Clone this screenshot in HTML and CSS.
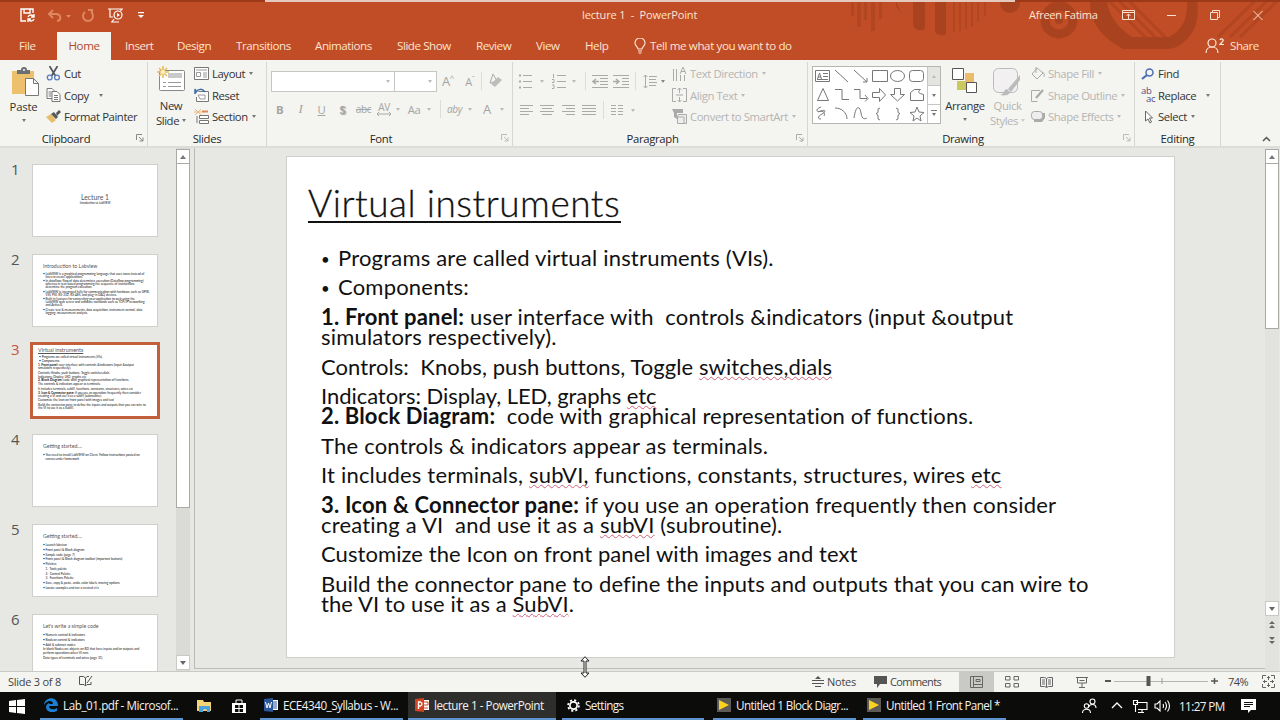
FILE: index.html
```
<!DOCTYPE html>
<html lang="en">
<head>
  <meta charset="utf-8">
  <title>lecture 1 - PowerPoint</title>
  <link rel="stylesheet" href="styles.css">
</head>
<body>
  <!-- title bar and tabs -->
  <header class="top">
    <svg class="art" width="480" height="60" viewBox="0 0 480 60" fill="#a9431f">
      <path d="M51 2h3v14h-3zM57 2h4v25h-4zM64 2h3v18h-3zM71 2h4v29h-4zM79 2h3v17h-3z" opacity=".6"/>
      <path d="M96 2l6 12-6-8zM113 2h12v25q0 4-6 3t-6-7zM135 2h11v31q0 3-6 2t-5-6z"/>
      <path d="M153 2h2v30h-2zM159 2h2v29h-2zM165 2h2v27h-2zM171 2h2v25h-2zM177 2h2v20h-2zM184 2h2v14h-2z" opacity=".6"/>
      <circle cx="210" cy="3" r="10"/>
      <circle cx="259" cy="20" r="14" fill="none" stroke="#a9431f" stroke-width="9"/><circle cx="259" cy="20" r="4"/>
      <path d="M290 0h17q2 22 25 37h37q20-10 18-37h10q4 27-12 41-8 8-18 8h-44q-34-18-33-49z"/>
      <path d="M308 0l42 42M318 0l41 41M328 0l40 40M418 37l38-37M430 37l38-37M440 37l38-37" stroke="#a9431f" stroke-width="3" opacity=".6"/>
    </svg>
    <div class="strip"><i></i></div>
    <div class="titlebar">
      <div class="quick">
        <svg width="15" height="15" viewBox="0 0 15 15" fill="none" stroke="#fff" stroke-width="1.4"><path d="M6 13H1V1h12v4M4 1v4h6V1M8 9a3 3 0 0 1 5-1M14 6v3h-3M14 11a3 3 0 0 1-5 1M8 14v-3h3"/></svg>
        <svg class="dim" width="24" height="14" viewBox="0 0 24 14" fill="none" stroke="#dd8763" stroke-width="2"><path d="M5 1L1 5l4 4M1 5h7c5 0 6 6 1 7"/><path d="M18 6h5l-2.500 3z" fill="#dd8763" stroke="none"/></svg>
        <svg class="dim" width="14" height="14" viewBox="0 0 14 14" fill="none" stroke="#dd8763" stroke-width="2"><path d="M4 3a5 5 0 1 0 6 0M7 1h4v4"/></svg>
        <svg class="show" width="16" height="15" viewBox="0 0 16 15" fill="none" stroke="#fff" stroke-width="1.2"><path d="M0 1h15M2 1v8h3M13 1v2M6 11l-2 3M3 14h8"/><circle cx="10" cy="7" r="4"/><path d="M9 5l3 2-3 2z" fill="#fff" stroke="none"/></svg>
        <svg class="more" width="6" height="7" viewBox="0 0 6 7" fill="#fff"><path d="M0 0h6v1.300H0zM0 3h6L3 6z"/></svg>
      </div>
      <div class="doc-title">lecture 1&nbsp; -&nbsp; PowerPoint</div>
      <div class="user">Afreen Fatima</div>
      <svg width="150" height="16" viewBox="0 0 150 16" fill="none" stroke="#f8dfce" stroke-width="1"><path d="M.5 3.500h12v9H.5zM.5 5.500h12M6.500 12V7M4.500 9l2-2 2 2M45 8.500h9M88.500 5.500h7v7h-7zM90.500 5V3.500h7v7H96M131.500 4l9 9M140.500 4l-9 9"/></svg>
    </div>
    <nav class="tabs">
      <span class="t-file">File</span>
      <span class="t-home">Home</span>
      <span class="t-insert">Insert</span>
      <span class="t-design">Design</span>
      <span class="t-trans">Transitions</span>
      <span class="t-anim">Animations</span>
      <span class="t-show">Slide Show</span>
      <span class="t-review">Review</span>
      <span class="t-view">View</span>
      <span class="t-help">Help</span>
      <svg class="bulb" width="12" height="16" viewBox="0 0 12 16" fill="none" stroke="#fdeadb" stroke-width="1.1"><path d="M4 11c0-2-3-3-3-6a5 5 0 0 1 10 0c0 3-3 4-3 6zM4 13h4M4.500 15h3"/></svg>
      <span class="tell">Tell me what you want to do</span>
      <svg class="person" width="21" height="16" viewBox="0 0 21 16" fill="none" stroke="#fdeadb" stroke-width="1.2"><circle cx="7" cy="5" r="4"/><path d="M1 15c0-8 12-8 12 0M15 2c1-2 4-1 3 1l-3 3.500h4"/></svg>
      <span class="share">Share</span>
    </nav>
  </header>

  <!-- ribbon -->
  <section class="ribbon">
    <div class="group g-clip">
      <div class="tools">
        <div class="big paste">
          <svg width="27" height="29" viewBox="0 0 27 29"><path d="M0 4h22v23H0z" fill="#edc06d"/><path d="M5 7V3h4q0-3 3-3t3 3h3v4z" fill="#6b6e72"/><circle cx="12" cy="3" r="1" fill="#fff"/><path d="M13.500 11.500h8l5 5v12h-13zM21.500 11.500v5h5" fill="#fff" stroke="#777"/></svg>
          <span>Paste</span><b class="arr"></b>
        </div>
        <div class="cmds">
          <div class="cmd"><svg width="14" height="15" viewBox="0 0 14 15" fill="none"><path d="M3 0l6 10M11 0L5 10" stroke="#50545c" stroke-width="1.700"/><circle cx="3.200" cy="11.500" r="2.400" stroke="#5b7dc0" stroke-width="1.300"/><circle cx="10.500" cy="11.500" r="2.400" stroke="#5b7dc0" stroke-width="1.300"/></svg><span>Cut</span></div>
          <div class="cmd"><svg width="14" height="14" viewBox="0 0 14 14" fill="#fff" stroke="#777"><path d="M.5.500h5l2 2v8h-7zM2 4h3M2 6h3M2 8h3"/><path d="M5.500 3.500h5l3 3v7h-8zM7.500 7.500h4M7.500 9.500h4M7.500 11.500h4"/></svg><span>Copy</span><b class="arr far"></b></div>
          <div class="cmd"><svg width="15" height="14" viewBox="0 0 15 14"><path d="M0 7l5-3 5 6-4 3z" fill="#e8bd69"/><path d="M5 4l3-2 4 5-2 2zM10 3l3-3 2 2-4 4z" fill="#55585c"/></svg><span>Format Painter</span></div>
        </div>
      </div>
      <div class="label"><span>Clipboard</span><svg class="launch" width="8" height="8" viewBox="0 0 8 8" fill="none" stroke="#888"><path d="M.5 6V.500H6M3 3l4 4M7 3.500V7H3.500"/></svg></div>
    </div>

    <div class="group g-slides">
      <div class="tools">
        <div class="big new">
          <svg width="29" height="26" viewBox="0 0 29 26"><rect x="2.500" y="4.500" width="25" height="20" rx="1" fill="#fff" stroke="#888"/><path d="M11 7h14v5H11z" fill="#c9c9c9"/><path d="M6 16.500h3M11 16.500h13M6 20.500h3M11 20.500h13" stroke="#999"/><path d="M6 0v12M0 6h12M2 2l8 8M10 2l-8 8" stroke="#e9bd5a" stroke-width="1.600"/><circle cx="6" cy="6" r="2" fill="#fff3cc"/></svg>
          <span>New</span><span class="second">Slide<b class="arr"></b></span>
        </div>
        <div class="cmds">
          <div class="cmd"><svg width="15" height="13" viewBox="0 0 15 13" fill="#fff" stroke="#777"><path d="M.5.500h14v12H.5z"/><path d="M2 3h11M2.500 5.500h4v4h-4zM9 6h4M9 8h4M9 10h4" stroke="#999"/></svg><span>Layout</span><b class="arr"></b></div>
          <div class="cmd"><svg width="15" height="14" viewBox="0 0 15 14" fill="none" stroke="#777"><path d="M4.500 3.500h10v10h-12V9" fill="#fff"/><path d="M4 7h7v4H6z" stroke="#999"/><path d="M1 6V1l1 3c2-3 6-4 9 0" stroke="#3f6fa8" stroke-width="1.500"/></svg><span>Reset</span></div>
          <div class="cmd"><svg width="15" height="15" viewBox="0 0 15 15" fill="#fff" stroke="#777"><path d="M0 3h8M1 0l6 6M7 0L1 6" stroke="#eeb57e"/><path d="M8 2.500h6" stroke="#e08a55" stroke-width="2"/><path d="M5.500 6.500h9v3h-9zM5.500 11.500h9v3h-9zM3 7v7"/></svg><span>Section</span><b class="arr"></b></div>
        </div>
      </div>
      <div class="label"><span>Slides</span></div>
    </div>

    <div class="group g-font off">
      <div class="rows">
        <div class="line">
          <i class="box w123"><b class="arr"></b></i><i class="box w43"><b class="arr"></b></i>
          <i class="c w22 glyph">A<sup>^</sup></i><i class="c w22 glyph sm">A<sup>ˇ</sup></i><i class="sep"></i>
          <i class="c w28"><svg width="14" height="14" viewBox="0 0 14 14"><path d="M1 9L4 0l4 7z" fill="none" stroke="#aaa"/><path d="M2 10l7-7 4 3-7 7z" fill="#bdbdbd"/></svg></i>
        </div>
        <div class="line second-line">
          <i class="c w21 bold">B</i><i class="c w21 ital">I</i><i class="c w21 under">U</i><i class="c w21 shadow">S</i><i class="c w21 strike">abc</i>
          <i class="c w20 kern">AV<svg width="14" height="4" viewBox="0 0 14 4" fill="none" stroke="#aaa"><path d="M0 2h14M2 0L0 2l2 2M12 0l2 2-2 2"/></svg></i><i class="c w8"><b class="arr"></b></i>
          <i class="c w24 aa">Aa</i><i class="c w6"><b class="arr"></b></i><i class="c w16"><i class="sep"></i></i>
          <i class="c w13 aby">aby</i><i class="c w18"><b class="arr"></b></i><i class="c w16 glyph">A</i><i class="c w14"><b class="arr"></b></i>
        </div>
      </div>
      <div class="label"><span>Font</span><svg class="launch" width="8" height="8" viewBox="0 0 8 8" fill="none" stroke="#bbb"><path d="M.5 6V.500H6M3 3l4 4M7 3.500V7H3.500"/></svg></div>
    </div>

    <div class="group g-para off">
      <div class="tools">
        <div class="rows">
          <div class="line">
            <i class="c w14"><svg width="14" height="15" viewBox="0 0 14 15" stroke="#aaa"><path d="M0 1.500h2M0 7.500h2M0 13.500h2" stroke-width="2"/><path d="M4 1.500h9M4 7.500h9M4 13.500h9"/></svg></i><i class="c w18"><b class="arr"></b></i>
            <i class="c w15"><svg width="14" height="15" viewBox="0 0 14 15" stroke="#aaa" fill="none"><path d="M1.500 0v4M0 5.500h2v3H0M0 11h2v3.500H0M5 1.500h9M5 7.500h9M5 13.500h9"/></svg></i><i class="c w16"><b class="arr"></b></i><i class="c w6"><i class="sep"></i></i>
            <i class="c w24"><svg width="16" height="13" viewBox="0 0 16 13" stroke="#aaa" fill="none"><path d="M0 .500h16M8 3.500h8M8 6.500h8M8 9.500h8M0 12.500h16"/><path d="M1 6.500h6M4 4L1 6.500 4 9" stroke-width="1.500"/></svg></i>
            <i class="c w18"><svg width="16" height="13" viewBox="0 0 16 13" stroke="#aaa" fill="none"><path d="M0 .500h16M9 3.500h7M9 6.500h7M9 9.500h7M0 12.500h16"/><path d="M0 6.500h6M3 4l3 2.500L3 9" stroke-width="1.500"/></svg></i><i class="c w11"><i class="sep"></i></i>
            <i class="c w18"><svg width="14" height="15" viewBox="0 0 14 15" stroke="#aaa" fill="none"><path d="M2.500 1v13M.500 3l2-2 2 2M.500 12l2 2 2-2M6 2.500h8M6 5.500h7M6 8.500h8M6 11.500h7"/></svg></i><i class="c w8"><b class="arr dk"></b></i>
          </div>
          <div class="line second-line">
            <i class="c w14"><svg width="13" height="11" viewBox="0 0 13 11" stroke="#aaa"><path d="M0 .500h13M0 3.500h9M0 6.500h13M0 9.500h9"/></svg></i>
            <i class="c w28"><svg width="14" height="11" viewBox="0 0 14 11" stroke="#aaa"><path d="M0 .500h14M2 3.500h10M0 6.500h14M2 9.500h10"/></svg></i>
            <i class="c w14"><svg width="13" height="11" viewBox="0 0 13 11" stroke="#aaa"><path d="M0 .500h13M4 3.500h9M0 6.500h13M4 9.500h9"/></svg></i>
            <i class="c w28"><svg width="14" height="11" viewBox="0 0 14 11" stroke="#aaa"><path d="M0 .500h14M0 3.500h14M0 6.500h14M0 9.500h14"/></svg></i><i class="sep"></i>
            <i class="c w26"><svg width="12" height="11" viewBox="0 0 12 11" stroke="#aaa"><path d="M0 .500h5M7 .500h5M0 3.500h5M7 3.500h5M0 6.500h5M7 6.500h5M0 9.500h5M7 9.500h5"/></svg></i><i class="c w6"><b class="arr"></b></i>
          </div>
        </div>
        <div class="cmds">
          <div class="cmd"><svg width="15" height="14" viewBox="0 0 15 14" stroke="#aaa" fill="none"><path d="M1.500 2v12M4.500 2v12M8 7l3-7 3 7M9 4.500h4M8.500 8v6M12.500 8v6"/></svg><span>Text Direction</span><b class="arr"></b></div>
          <div class="cmd"><svg width="15" height="14" viewBox="0 0 15 14" stroke="#aaa" fill="none"><path d="M4 .500H.5v13H4M11 .500h3.500v13H11M7.500 0v5M5.500 2l2-2 2 2M4 7h7M7.500 14V9M5.500 12l2 2 2-2"/></svg><span>Align Text</span><b class="arr"></b></div>
          <div class="cmd"><svg width="15" height="15" viewBox="0 0 15 15"><path d="M0 0h11v4H5v6L2 8V4z" fill="#aaa"/><path d="M6.500 5.500h8v9h-9v-7zM5 8h7v6" fill="#eee" stroke="#aaa"/></svg><span>Convert to SmartArt</span><b class="arr"></b></div>
        </div>
      </div>
      <div class="label"><span>Paragraph</span><svg class="launch" width="8" height="8" viewBox="0 0 8 8" fill="none" stroke="#aaa"><path d="M.5 6V.500H6M3 3l4 4M7 3.500V7H3.500"/></svg></div>
    </div>

    <div class="group g-draw">
      <div class="tools">
        <div class="gallery">
          <svg width="114" height="56" viewBox="0 0 114 56" fill="none" stroke="#777" stroke-width="1">
            <path d="M2.500 3.500h14v11h-14zM4.500 12l2-6 2 6M5 10h3M10 6.500h5M10 9.500h5M4 12.500h11"/>
            <path d="M22 3l13 12M41 3l13 12M54 11v4h-4M59.500 3.500h15v11h-15z"/><ellipse cx="84.500" cy="9" rx="7" ry="5.500"/><rect x="96.500" y="3.500" width="14" height="11" rx="3"/>
            <path d="M4.500 33.500l5.500-12 5.500 12zM22 22.500h7v10h7M41 22.500h6v9h7M52 28l3 3.500-3 3M59.500 25.500h7v-4l6 6.500-6 6.500v-4h-7zM81.500 21.500h6v6h4l-7 6.500-7-6.500h4zM97.500 25.500l4-3h6c-4 3-1 4 3 5v6h-13z"/>
            <path d="M8 40c-6 2-5 6 0 4s5 1 1 3-5 5-1 5M5 45c4-2 8 0 6 4M22 41c7 0 12 5 12 11M41 51c2-14 6-12 7-5s4 6 6 5M67 41q-3 0-2 4 0 1-2 1.500 2 .500 2 2.500-1 4 2 4M83 41q3 0 2 4 0 1 2 1.500-2 .500-2 2.500 1 4-2 4M104 40l2 5 5 .500-4 3.500 1 5-4-3-4 3 1-5-4-3.500 5-.500z"/>
          </svg>
          <div class="gal-nav"><i class="mute"><b class="arr up"></b></i><i><b class="arr"></b></i><i><b class="arr ln"></b></i></div>
        </div>
        <div class="big arrange">
          <svg width="26" height="26" viewBox="0 0 26 26"><path d="M13 5h9v9h-9z" fill="#e9bd69"/><path d="M5 13h9v9H5z" fill="#c9c95e"/><path d="M.5.500h11v11H.500zM14.500 14.500h10v10h-10z" fill="#fff" stroke="#555"/></svg>
          <span>Arrange</span><b class="arr"></b>
        </div>
        <div class="big quickst off">
          <svg width="29" height="28" viewBox="0 0 29 28"><rect x=".5" y=".5" width="24" height="24" rx="5" fill="#f3f0f1" stroke="#bbb"/><path d="M27 7l-12 14 3 3 9-12zM14 21c-3 0-3 5-7 6 5 1 10 0 10-3z" fill="#bbb"/></svg>
          <span>Quick</span><span class="second">Styles<b class="arr"></b></span>
        </div>
        <div class="cmds off">
          <div class="cmd"><svg width="14" height="14" viewBox="0 0 14 14" stroke="#aaa" fill="none"><path d="M6 1L1 7l5 5 6-6zM5 0v6M11 5c3 1 2 3 2 5"/></svg><span>Shape Fill</span><b class="arr"></b></div>
          <div class="cmd"><svg width="14" height="13" viewBox="0 0 14 13" stroke="#aaa" fill="none"><path d="M9 1.500H.5v11h6"/><path d="M5 9l7-8" stroke-width="2.300"/></svg><span>Shape Outline</span><b class="arr"></b></div>
          <div class="cmd"><svg width="14" height="13" viewBox="0 0 14 13"><path d="M3 3h11v5l-3 4H3z" fill="#aaa"/><rect x=".5" y="1.500" width="11" height="8" rx="3" fill="#eee" stroke="#aaa"/></svg><span>Shape Effects</span><b class="arr"></b></div>
        </div>
      </div>
      <div class="label"><span>Drawing</span><svg class="launch" width="8" height="8" viewBox="0 0 8 8" fill="none" stroke="#bbb"><path d="M.5 6V.500H6M3 3l4 4M7 3.500V7H3.500"/></svg></div>
    </div>

    <div class="group g-edit">
      <div class="tools">
        <div class="cmds">
          <div class="cmd"><svg width="13" height="12" viewBox="0 0 13 12" fill="none" stroke="#4d6db3"><circle cx="8.500" cy="4.500" r="3.500" stroke-width="1.500"/><path d="M6 7l-5 4" stroke-width="2.200"/></svg><span>Find</span></div>
          <div class="cmd"><i class="abac"><em>ab</em><em class="ac">ac</em></i><span>Replace</span><b class="arr far"></b></div>
          <div class="cmd"><svg width="13" height="14" viewBox="0 0 13 14" fill="#fff" stroke="#666"><path d="M4.500 1v10l2.500-2 2 4 1.500-1-2-4h3z"/></svg><span>Select</span><b class="arr"></b></div>
        </div>
      </div>
      <div class="label"><span>Editing</span></div>
    </div>
    <svg class="collapse" width="9" height="6" viewBox="0 0 9 6" fill="none" stroke="#555" stroke-width="1.500"><path d="M1 5l3.500-3.500L8 5"/></svg>
  </section>

  <!-- slide list and slide -->
  <main class="work">
    <aside class="thumbs">
      <div class="item"><span class="num">1</span><div class="thumb cover"><h6>Lecture 1</h6><p>Introduction to LabVIEW</p></div></div>
      <div class="item"><span class="num">2</span><div class="thumb dense"><h6>Introduction to Labview</h6>
        <ul><li>LabVIEW is a graphical programming language that uses icons instead of<br>lines to create applications.</li><li>In dataflow: flow of data determines execution (Dataflow programming)<br>whereas in text based programming the sequence of instructions<br>determine the program execution.</li><li>LabVIEW is integrated fully for communication with hardware such as GPIB,<br>VXI, PXI, RS-232, RS-485, and plug-in DAQ devices.</li><li>Built-in features for connecting your application to web using the<br>LabVIEW web server and software standards such as TCP/IP networking<br>and ActiveX.</li><li>Create test &amp; measurements, data acquisition, instrument control, data<br>logging, measurement analysis.</li></ul></div></div>
      <div class="item sel"><span class="num">3</span><div class="thumb mini"><h6><u>Virtual instruments</u></h6>
        <p class="in">• Programs are called virtual instruments (VIs).</p><p class="in">• Components:</p><p><b>1. Front panel:</b> user interface with controls &amp;indicators (input &amp;output<br>simulators respectively).</p><p>Controls: Knobs, push buttons, Toggle switches,dials</p><p>Indicators: Display, LED, graphs etc<br><b>2. Block Diagram:</b> code with graphical representation of functions.</p><p>The controls &amp; indicators appear as terminals.</p><p>It includes terminals, subVI, functions, constants, structures, wires etc</p><p><b>3. Icon &amp; Connector pane:</b> if you use an operation frequently then consider<br>creating a VI and use it as a subVI (subroutine).</p><p>Customize the Icon on front panel with images and text</p><p>Build the connector pane to define the inputs and outputs that you can wire to<br>the VI to use it as a SubVI.</p></div></div>
      <div class="item"><span class="num">4</span><div class="thumb"><h6>Getting started....</h6><ul><li>You need to install LabVIEW on Client. Follow instructions posted on<br>canvas under homework</li></ul></div></div>
      <div class="item"><span class="num">5</span><div class="thumb list"><h6>Getting started....</h6><ul><li>Launch labview</li><li>Front panel &amp; Block diagram</li><li>Sample code (page 7)</li><li>Front panel &amp; Block diagram toolbar (important buttons)</li><li>Palettes</li><li class="n">1.&nbsp; Tools palette</li><li class="n">2.&nbsp; Control Palette</li><li class="n">3.&nbsp; Functions Palette</li><li>Save, copy &amp; paste, undo, color labels, moving options</li><li>Locate examples and run a created vi/s</li></ul></div></div>
      <div class="item"><span class="num">6</span><div class="thumb list"><h6>Let's write a simple code</h6><ul><li>Numeric control &amp; indicators</li><li>Boolean control &amp; indicators</li><li>Add &amp; subtract nodes</li></ul><p>In block Nodes are objects on BD that have inputs and/or outputs and<br>perform operations when VI runs</p><p>Data types of terminals and wires (page 31)</p></div></div>
    </aside>
    <div class="scroll left"><i class="btn"><b class="arr up"></b></i><i class="bar"></i><i class="btn low"><b class="arr"></b></i></div>

    <section class="stage">
      <article class="slide">
        <h1>Virtual instruments</h1>
        <p class="bul">Programs are called virtual instruments (VIs).</p>
        <p class="bul">Components:</p>
        <p><b>1. Front panel:</b> user interface with  controls &amp;indicators (input &amp;output</p>
        <p class="tight">simulators respectively).</p>
        <p class="snug">Controls:  Knobs, push buttons, Toggle <u>switches,dials</u></p>
        <p class="snugger">Indicators: Display, LED, graphs <u>etc</u></p>
        <p class="tight long"><b>2. Block Diagram:</b>  code with graphical representation of functions.</p>
        <p>The controls &amp; indicators appear as terminals.</p>
        <p>It includes terminals, <u>subVI,</u> functions, constants, structures, wires <u>etc</u></p>
        <p><b>3. Icon &amp; Connector pane:</b> if you use an operation frequently then consider</p>
        <p class="tight">creating a VI  and use it as a <u>subVI</u> (subroutine).</p>
        <p class="snug">Customize the Icon on front panel with images and text</p>
        <p class="long">Build the connector pane to define the inputs and outputs that you can wire to</p>
        <p class="tight snug">the VI to use it as a <u>SubVI</u>.</p>
      </article>
    </section>
    <div class="scroll right"><i class="btn"><b class="arr up"></b></i><i class="bar"></i><i class="btn low"><b class="arr"></b></i>
      <svg width="14" height="32" viewBox="0 0 14 32" fill="#666"><path d="M4 8l3-3 3 3zM4 12l3-3 3 3zM4 21h6l-3 3zM4 25h6l-3 3z"/></svg></div>
  </main>

  <footer class="status">
    <span class="count">Slide 3 of 8</span>
    <svg class="spell" width="14" height="12" viewBox="0 0 14 12" fill="none" stroke="#555"><path d="M6.500 11L5 9.500H.5v-8h4l2 1.500v8l1.500-1.500h4V7M6.500 3L8 1.500h2M8 8l5-7"/></svg>
    <svg class="notes-i" width="12" height="12" viewBox="0 0 12 12" stroke="#555"><path d="M0 5.500h12M0 8.500h12M3 11.500h6"/><path d="M3 4l3-3 3 3z" fill="#555" stroke="none"/></svg>
    <span class="notes">Notes</span>
    <svg class="com-i" width="14" height="13" viewBox="0 0 14 13" fill="#555"><path d="M0 1h13v8H6l-3 4V9H0z"/></svg>
    <span class="comments">Comments</span>
    <i class="view on"><svg width="13" height="12" viewBox="0 0 13 12" fill="none" stroke="#666"><path d="M.5.500h12v11H.500zM3.500 1v10M4 8.500h8M6 3.500h4v2H6z"/></svg></i>
    <i class="view"><svg width="14" height="12" viewBox="0 0 14 12" fill="none" stroke="#666"><path d="M.5.500h4.500v3.500H.500zM9 .500h4.500v3.500H9zM.5 7.500h4.500v3.500H.500zM9 7.500h4.500v3.500H9z"/></svg></i>
    <i class="view"><svg width="13" height="12" viewBox="0 0 13 12" fill="none" stroke="#666"><path d="M.5 1.500h4l2 1 2-1h4v9h-4l-2 1-2-1h-4zM6.500 3v8M2 4h3M2 6h3M2 8h3M8 4h3M8 6h3M8 8h3"/></svg></i>
    <i class="view"><svg width="12" height="12" viewBox="0 0 12 12" fill="none" stroke="#666"><path d="M0 1.500h12M1.500 2v5h9V2M3.500 4.500h5M6 7v4M3 11.500h6"/></svg></i>
    <svg class="zoombar" width="114" height="14" viewBox="0 0 114 14" stroke="#555"><path d="M0 7h6" stroke-width="2"/><path d="M9 7.500h94" stroke="#b5b5b5"/><path d="M57 4v6" stroke="#999"/><path d="M41.500 2h4v10h-4z" fill="#555" stroke="none"/><path d="M106 7h7M109.500 4v6" stroke-width="1.500"/></svg>
    <span class="pct">74%</span>
    <svg class="fit" width="13" height="13" viewBox="0 0 13 13" fill="none" stroke="#666"><path d="M.5 4V.5H4M9 .500h3.500V4M12.500 9v3.500H9M4 12.500H.5V9M6.500 1v4M5 3l1.500-1.500L8 3M6.500 8v4M5 10l1.500 1.500L8 10M1 6.500h4M3 5L1.500 6.500 3 8M8 6.500h4M10 5l1.500 1.500L10 8"/></svg>
  </footer>

  <footer class="taskbar">
    <svg class="start" width="16" height="15" viewBox="0 0 16 15" fill="#fff"><path d="M0 2l7-1v6H0zM8 1l8-1v7H8zM0 8h7v6l-7-1zM8 8h8v7l-8-1z"/></svg>
    <div class="task t1"><svg width="14" height="14" viewBox="0 0 14 14" fill="#1b7fd4"><path d="M0 7C1-2 14-2 14 8H5c0 4 5 4 8 2v3C7 16 2 13 2 9c0-2 2-4 4-4-1 0-1 1-1 1h4C9 2 3 2 0 7z"/></svg><span>Lab_01.pdf - Microsof...</span></div>
    <svg class="folder" width="15" height="14" viewBox="0 0 15 14"><path d="M0 1h6l1 2h7v9H0z" fill="#f4d477"/><path d="M2 7h11v6h-3v-2q-2-2-4 0v2H2z" fill="#4ba3dd"/></svg>
    <svg class="store" width="14" height="15" viewBox="0 0 14 15"><path d="M0 4h14v10H0z" fill="#fff"/><path d="M4 5V1h6v4" fill="none" stroke="#fff"/><path d="M3 6h3.500v3H3zM7.500 6H11v3H7.500zM3 10h3.500v3H3zM7.500 10H11v3H7.500z" fill="#0c0d0b"/></svg>
    <div class="task t2"><svg width="14" height="14" viewBox="0 0 14 14"><path d="M7 2h7v10H7z" fill="#fff"/><path d="M9 4h4M9 6h4M9 8h4M9 10h4" stroke="#2b579a"/><path d="M0 1l9-1v14l-9-1z" fill="#2b579a"/><path d="M1.500 4l1.500 6 1.500-5L6 10l1.500-6" fill="none" stroke="#fff"/></svg><span>ECE4340_Syllabus - W...</span></div>
    <div class="task t3"><svg width="14" height="14" viewBox="0 0 14 14"><path d="M7 2h7v10H7z" fill="#fff"/><path d="M9 4h4v3H9M9 10h4" stroke="#d04423" fill="none"/><path d="M0 1l9-1v14l-9-1z" fill="#d04423"/><path d="M3.500 11V4h2q3 2 0 4h-2" fill="none" stroke="#fff" stroke-width="1.400"/></svg><span>lecture 1 - PowerPoint</span></div>
    <div class="task t4"><svg width="13" height="13" viewBox="0 0 13 13" fill="none" stroke="#fff"><circle cx="6.500" cy="6.500" r="3.600" stroke-width="1.700"/><circle cx="6.500" cy="6.500" r="5.400" stroke-width="1.800" stroke-dasharray="2.100 2.140"/></svg><span>Settings</span></div>
    <div class="task t5"><svg width="14" height="14" viewBox="0 0 14 14"><path d="M0 0h14v14H0z" fill="#5d5a58"/><path d="M2 2l10 5-10 5z" fill="#fbd21c"/></svg><span>Untitled 1 Block Diagr...</span></div>
    <div class="task t6"><svg width="14" height="14" viewBox="0 0 14 14"><path d="M0 0h14v14H0z" fill="#5d5a58"/><path d="M2 2l10 5-10 5z" fill="#fbd21c"/></svg><span>Untitled 1 Front Panel *</span></div>
    <svg class="tray" width="90" height="16" viewBox="0 0 90 16" fill="none" stroke="#fff" stroke-width="1.100"><circle cx="10.500" cy="3.500" r="2.500"/><path d="M7 9c0-3 7-4 7 1"/><circle cx="4.500" cy="8" r="2.200"/><path d="M.5 15c0-5 8-5 8 0"/><path d="M30 10l5-5 5 5" stroke-width="1.300"/><path d="M54 4.500h11v7h-9M60 12v2M56 14.500h6M51.500 2.500h4v4h-4zM53.500 7v7"/><path d="M73 6h2l3-3v10l-3-3h-2zM81 6q1 2 0 4M83 4q3 4 0 8M85.500 2.500q4 5.500 0 11"/></svg>
    <span class="clock">11:27 PM</span>
    <svg class="note" width="17" height="16" viewBox="0 0 17 16"><path d="M1 1h15v11h-5l-3 3v-3H1z" fill="#fff"/><path d="M4 4.500h9M4 6.500h9M4 8.500h6" stroke="#111"/></svg>
  </footer>

  <svg class="cursor" width="10" height="22" viewBox="0 0 10 22" fill="#fff" stroke="#222"><path d="M5 .700L9 5H6v12h3l-4 4.300L1 17h3V5H1z"/></svg>
</body>
</html>
```
FILE: styles.css
```
* {
  box-sizing: border-box;
  margin: 0;
  padding: 0;
}

body {
  width: 1280px;
  height: 720px;
  overflow: hidden;
  display: grid;
  grid-template-rows: 60px 88px 523px 21px 28px;
  background: #e7e8e4;
  font-family: "Open Sans", "Noto Sans", sans-serif;
  font-size: 11.3px;
  letter-spacing: -0.4px;
  color: #333;
  white-space: nowrap;
}

svg { display: block; flex: none; }
i { font-style: normal; }

/* ---- title bar ---- */
.top {
  position: relative;
  background: #c04d25;
  color: #fde3d0;
}
.art { position: absolute; right: 0; top: 0; }
.strip { position: relative; height: 2px; background: #9b3918; }
.strip i { display: block; width: 750px; height: 2px; margin-left: 265px; background: #e6c9be; }
.titlebar {
  position: relative;
  display: flex;
  align-items: center;
  height: 29px;
  padding: 0 0 4px 20px;
}
.quick { display: flex; align-items: center; width: 562px; padding-top: 2px; }
.quick .dim { margin-left: 13px; }
.quick .dim + .dim { margin-left: 9px; }
.quick .show { margin-left: 13px; }
.quick .more { margin-left: 14px; }
.doc-title { width: 447px; font-size: 11px; letter-spacing: -0.15px; }
.user { width: 93px; font-size: 11px; letter-spacing: -0.25px; }

.tabs {
  position: relative;
  display: flex;
  height: 29px;
  line-height: 29px;
  font-size: 11.6px;
  letter-spacing: -0.45px;
}
.tabs span { flex: none; }
.t-file { width: 57px; padding-left: 19px; }
.t-home { width: 54px; text-align: center; background: #f4f4f1; color: #b0492a; margin-top: 1px; line-height: 28px; }
.t-insert { width: 66px; padding-left: 14px; }
.t-design { width: 59px; }
.t-trans { width: 79px; }
.t-anim { width: 82px; }
.t-show { width: 79px; }
.t-review { width: 60px; }
.t-view { width: 49px; }
.t-help { width: 49px; }
.bulb { margin-top: 7px; }
.tell { width: 559px; padding-left: 4px; letter-spacing: -0.4px; }
.person { margin-top: 7px; }
.share { padding-left: 4px; }

/* ---- ribbon ---- */
.ribbon {
  display: flex;
  background: #f4f4f1;
  border-bottom: 2px solid #dcdcd9;
  color: #333;
}
.group {
  display: flex;
  flex-direction: column;
  flex: none;
  height: 84px;
  margin-top: 2px;
  border-right: 1px solid #d6d6d3;
}
.g-clip { width: 148px; padding-left: 8px; }
.g-slides { width: 119px; padding-left: 7px; }
.g-font { width: 246px; padding-left: 4px; }
.g-para { width: 295px; padding-left: 6px; }
.g-draw { width: 327px; padding-left: 4px; }
.g-edit { width: 86px; padding-left: 6px; }

.tools { display: flex; height: 68px; }
.label {
  display: flex;
  align-items: center;
  height: 16px;
  color: #262626;
  letter-spacing: -0.3px;
}
.label span { flex: 1; text-align: center; padding-right: 4px; }
.g-clip .label { margin-left: -8px; }
.g-slides .label { margin-left: -7px; }
.g-slides .label span { padding-right: 0; }
.g-font .label { margin-left: -6px; }
.g-para .label { margin-left: -6px; }
.g-draw .label { margin-left: -5px; }
.g-edit .label { margin-left: -6px; }
.g-edit .label span { padding-right: 0; }
.launch { margin-right: 3px; }

.cmds { padding-top: 1px; }
.cmd { display: flex; align-items: center; height: 21.5px; }
.cmd > span { padding-left: 3px; }
.g-clip .cmds { padding-left: 7px; }
.g-clip .cmd svg { width: 15px; }
.g-slides .cmds { padding-left: 7px; }
.off .cmd, .off .big { color: #b4b4b1; }
.off.big, .off.cmds .cmd { color: #b4b4b1; }

.arr {
  display: inline-block;
  width: 0;
  height: 0;
  margin-left: 4px;
  border: 2.5px solid transparent;
  border-top: 3px solid #777;
  border-bottom: 0;
}
.arr.up { border-top: 0; border-bottom: 3px solid #777; }
.arr.far { margin-left: 10px; }
.off .arr { border-top-color: #bbb; }
.off .arr.dk { border-top-color: #888; }

.big { display: flex; flex-direction: column; align-items: center; line-height: 15px; }
.big > .arr { margin: 5px 0 0; }
.big .second .arr { margin: 0 0 3px 3px; }
.paste { width: 31px; padding-top: 5px; }
.paste svg { margin: 0 0 3px 4px; }
.paste span { letter-spacing: -0.2px; }
.new { width: 32px; padding-top: 4px; }
.new svg { margin-bottom: 6px; }

.rows { padding-top: 8px; height: 68px; }
.line { display: flex; align-items: center; height: 22px; }
.second-line { margin-top: 7px; }
.g-font .second-line { margin-left: -2px; margin-top: 6px; }
.g-para .rows { width: 153px; flex: none; }
.c { display: flex; align-items: center; justify-content: center; flex: none; color: #a5a5a2; }
.c .arr, .box .arr { margin: 0; }
.w6 { width: 6px; }
.w8 { width: 8px; }
.w11 { width: 11px; }
.w13 { width: 13px; }
.w14 { width: 14px; }
.w15 { width: 15px; }
.w16 { width: 16px; }
.w18 { width: 18px; }
.w20 { width: 20px; }
.w21 { width: 21px; }
.w22 { width: 22px; }
.w24 { width: 24px; }
.w26 { width: 26px; }
.w28 { width: 28px; }
.sep { width: 1px; height: 18px; background: #dcdcd9; }
.box {
  display: flex;
  align-items: center;
  justify-content: flex-end;
  height: 21px;
  padding-right: 4px;
  background: #fff;
  border: 1px solid #c6c6c3;
}
.w123 { width: 124px; }
.w43 { width: 43px; margin-left: -1px; }
.glyph { font-size: 13px; }
.glyph.sm { font-size: 11px; }
.glyph sup { font-size: 8px; line-height: 8px; margin-top: -7px; }
.bold { font-weight: 700; }
.ital { font-family: "Liberation Serif", serif; font-style: italic; font-size: 13px; }
.under { text-decoration: underline; }
.shadow { font-weight: 700; text-shadow: 1px 1px 1px #aaa; }
.strike { font-size: 10px; text-decoration: line-through; }
.kern { flex-direction: column; font-size: 10px; line-height: 10px; }
.aby { font-size: 10px; font-style: italic; }

.gallery {
  display: flex;
  width: 129px;
  height: 58px;
  margin-top: 4px;
  background: #fff;
  border: 1px solid #b5b5b2;
}
.gal-nav { display: flex; flex-direction: column; width: 13px; border-left: 1px solid #c6c6c3; }
.gal-nav i { display: flex; flex: 1; align-items: center; justify-content: center; border-bottom: 1px solid #c6c6c3; }
.gal-nav i:last-child { border-bottom: 0; }
.gal-nav .mute { background: #e4e4e1; }
.gal-nav .arr { margin: 0; }
.gal-nav .mute .arr { border-bottom-color: #bbb; }
.gal-nav .ln { position: relative; }
.gal-nav .ln::before { content: ""; position: absolute; left: -3px; top: -6px; width: 6px; height: 1px; background: #777; }
.arrange { width: 40px; margin-left: 4px; padding-top: 6px; }
.arrange svg { margin-bottom: 4px; }
.quickst { width: 37px; margin-left: 4px; margin-right: -1px; padding-top: 6px; }
.quickst svg { margin-bottom: 2px; }
.quickst.off .arr { border-top-color: #ccc; }
.g-draw .cmds { margin-left: 6px; }
.abac { display: flex; flex-direction: column; width: 14px; font-size: 9.5px; line-height: 8px; color: #5b4a78; }
.abac em { font-style: normal; height: 8px; }
.abac .ac { padding-left: 5px; }
.g-edit .cmd svg { margin-right: 1px; }
.collapse { margin: 76px 0 0 41px; }

/* ---- slide list ---- */
.work { display: flex; overflow: hidden; }
.thumbs { width: 176px; padding-top: 16px; overflow: hidden; flex: none; }
.item { display: flex; height: 90px; padding-left: 11px; }
.num { width: 21px; font-size: 15px; line-height: 10px; color: #555; }
.thumb {
  width: 126px;
  height: 73px;
  flex: none;
  padding: 9px 0 0 10px;
  background: #fff;
  border: 1px solid #cfcfcc;
  font-family: Lato, sans-serif;
  font-size: 3.15px;
  line-height: 3.6px;
  letter-spacing: 0;
  color: #111;
  overflow: hidden;
}
.thumb h6 { font-size: 5.2px; line-height: 5px; font-weight: 400; color: #555; margin-bottom: 5px; }
.thumb ul { list-style: none; }
.thumb li { padding-left: 2.5px; margin-bottom: 1.2px; position: relative; }
.thumb li::before { content: "•"; position: absolute; left: 0; }
.thumb li.n::before { content: ""; }
.thumb p { margin-bottom: 1.2px; }
.thumb.cover { padding: 29px 0 0; text-align: center; }
.thumb.cover h6 { font-size: 6.8px; line-height: 7px; margin: 0; }
.cover p { font-size: 2.8px; line-height: 4px; }
.thumb.dense h6 { margin-bottom: 3.5px; }
.dense li { line-height: 3.1px; }
.thumb.dense li { margin-bottom: 1.3px; }
.thumb.mini { padding: 3px 0 0 5px; }
.thumb.mini h6 { margin-bottom: 2.5px; font-size: 5.4px; }
.thumb.mini p { line-height: 2.9px; margin-bottom: 1.5px; }
.mini .in { padding-left: 1px; }
.thumb.list h6 { margin-bottom: 5px; }
.sel .num { color: #c8553f; }
.sel .thumb { width: 130px; height: 77px; margin: -2px 0 0 -2px; border: 3px solid #c35f3b; }

.scroll { width: 14px; flex: none; display: flex; flex-direction: column; background: #dadad7; }
.scroll i { display: block; background: #fff; border: 1px solid #a9a9a6; flex: none; }
.scroll .btn { display: flex; align-items: center; justify-content: center; height: 15px; }
.scroll .arr { margin: 0; border-width: 3.5px; border-top-width: 4px; border-bottom-width: 0; border-top-color: #666; }
.scroll .arr.up { border-bottom-width: 4px; border-top-width: 0; }
.scroll .low { margin-top: auto; border-color: #c9c9c6; }
.left .bar { height: 345px; margin-top: -1px; }
.left { padding: 1px 0; margin-right: 4px; }
.right { margin-left: auto; padding: 1px 0 23px; margin-right: 1px; background: #e2e2df; }
.right .bar { height: 166px; margin-top: -1px; }

.stage { width: 1071px; flex: none; border-left: 1px solid #b9b9b6; border-bottom: 1px solid #bcbcb9; height: 521px; padding: 8px 0 0 91px; }
.slide {
  width: 889px;
  height: 502px;
  padding: 28px 0 0 34px;
  background: #fff;
  border: 1px solid #cfcfcc;
  font-family: Lato, sans-serif;
  font-size: 22px;
  letter-spacing: 0.2px;
  font-variant-ligatures: none;
  color: #111;
}
.slide h1 {
  width: 313px;
  height: 38px;
  margin: 0 0 25px -13px;
  font-weight: 300;
  font-size: 37px;
  letter-spacing: 0.5px;
  line-height: 36px;
  -webkit-text-stroke: 0.3px #111;
  border-bottom: 2px solid #111;
}
.slide p { height: 20.4px; line-height: 20.4px; margin-top: 9px; white-space: pre; }
.slide p.tight { margin-top: 0; }
.slide p.long { letter-spacing: 0.15px; }
.slide p.snug { letter-spacing: 0.08px; }
.slide p.snugger { letter-spacing: -0.05px; }
.slide .bul::before { content: "•"; display: inline-block; width: 17px; font-size: 15px; vertical-align: 1px; line-height: 10px; }
.slide u { text-decoration: underline wavy #d0607a 0.5px; text-underline-offset: 1px; text-decoration-skip-ink: none; }

/* ---- status bar ---- */
.status {
  display: flex;
  align-items: center;
  background: #f4f4f1;
  border-top: 1px solid #c9c9c6;
  padding-bottom: 2px;
  font-size: 11px;
  letter-spacing: -0.25px;
  color: #444;
}
.count { width: 79px; padding-left: 8px; }
.notes-i { margin-left: 719px; }
.notes { width: 50px; padding-left: 3px; }
.comments { width: 71px; padding-left: 2px; letter-spacing: -0.6px; }
.view { display: flex; align-items: center; justify-content: center; width: 35px; height: 21px; margin-bottom: -2px; }
.view.on { background: #c9c9c6; }
.zoombar { margin-left: 6px; }
.pct { width: 34px; padding-left: 9px; letter-spacing: -0.5px; }
.fit { margin-left: auto; margin-right: 5px; }

/* ---- taskbar ---- */
.taskbar {
  display: flex;
  align-items: center;
  background: #0c0d0b;
  color: #f1f1f1;
  font-size: 11.7px;
  letter-spacing: -0.6px;
}
.start { margin: 0 15px 0 9px; }
.task { display: flex; align-items: center; flex: none; height: 28px; border-bottom: 2px solid #5d94cf; padding-left: 4px; }
.task span { padding-left: 5px; }
.t1 { width: 143px; letter-spacing: -0.45px; }
.folder { margin-left: 14px; }
.store { margin: 0 14px 0 20px; }
.t2 { width: 143px; margin-right: 5px; letter-spacing: -0.5px; }
.t3 { width: 148px; margin-right: 6px; padding-left: 7px; letter-spacing: -0.48px; background: #2e2f2d; }
.t4 { width: 142px; margin-right: 9px; padding-left: 5px; }
.t5 { width: 143px; margin-right: 7px; }
.t6 { width: 143px; }
.tray { margin-left: 76px; }
.clock { margin-left: 7px; width: 61px; }

/* resize pointer over the notes splitter */
.cursor { position: absolute; left: 580px; top: 656px; }
```
